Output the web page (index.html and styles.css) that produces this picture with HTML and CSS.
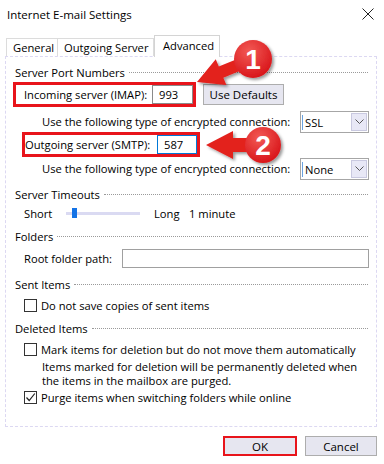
FILE: index.html
```html
<!DOCTYPE html>
<html lang="en">
<head>
    <meta charset="UTF-8">
    <title>Internet E-mail Settings</title>
    <link rel="stylesheet" href="styles.css">
</head>
<body>
<div class="dialog">

    <div class="titlebar">
        <span class="title">Internet E-mail Settings</span>
        <svg class="close" width="12" height="12" viewBox="0 0 12 12">
            <path d="M0.5 0.5 L11.5 11.5 M11.5 0.5 L0.5 11.5" stroke="#222" stroke-width="1"/>
        </svg>
    </div>

    <div class="tabs">
        <div class="tab tab-general">General</div>
        <div class="tab tab-outgoing">Outgoing Server</div>
        <div class="tab tab-advanced active">Advanced</div>
    </div>

    <div class="panel">
        <div class="group-title g-ports"><span>Server Port Numbers</span></div>

        <div class="row port-row first-port">
            <div class="callout incoming">
                <span>Incoming server (IMAP):</span>
                <div class="field port">993</div>
            </div>
            <div class="btn defaults">Use Defaults</div>
        </div>

        <div class="row enc-row enc-first">
            <span>Use the following type of encrypted connection:</span>
            <div class="select">
                <span class="select-value">SSL</span>
                <span class="drop"><svg width="9" height="6" viewBox="0 0 9 6"><path d="M0.5 0.5 L4.5 4.5 L8.5 0.5" fill="none" stroke="#555" stroke-width="1"/></svg></span>
            </div>
        </div>

        <div class="row port-row">
            <div class="callout outgoing">
                <span>Outgoing server (SMTP):</span>
                <div class="field port focused">587</div>
            </div>
        </div>

        <div class="row enc-row enc-second">
            <span>Use the following type of encrypted connection:</span>
            <div class="select">
                <span class="select-value">None</span>
                <span class="drop"><svg width="9" height="6" viewBox="0 0 9 6"><path d="M0.5 0.5 L4.5 4.5 L8.5 0.5" fill="none" stroke="#555" stroke-width="1"/></svg></span>
            </div>
        </div>

        <div class="group-title g-timeouts"><span>Server Timeouts</span></div>
        <div class="row slider-row">
            <span class="short">Short</span>
            <div class="track"><div class="thumb"></div></div>
            <span class="long">Long</span>
            <span>1 minute</span>
        </div>

        <div class="group-title g-folders"><span>Folders</span></div>
        <div class="row root-row">
            <span>Root folder path:</span>
            <div class="field root"></div>
        </div>

        <div class="group-title g-sent"><span>Sent Items</span></div>
        <div class="row check-row cb-sent">
            <span class="checkbox"></span>
            <span>Do not save copies of sent items</span>
        </div>

        <div class="group-title g-deleted"><span>Deleted Items</span></div>
        <div class="row check-row cb-mark">
            <span class="checkbox"></span>
            <span>Mark items for deletion but do not move them automatically</span>
        </div>
        <div class="note">
            <div class="note-line">Items marked for deletion will be permanently deleted when</div>
            <div class="note-line">the items in the mailbox are purged.</div>
        </div>
        <div class="row check-row cb-purge">
            <span class="checkbox checked"><svg width="11" height="11" viewBox="0 0 11 11"><path d="M1.5 5.5 L4.2 8.5 L9.8 1.5" fill="none" stroke="#222" stroke-width="1.2"/></svg></span>
            <span>Purge items when switching folders while online</span>
        </div>
    </div>

    <div class="actions">
        <div class="btn ok">OK</div>
        <div class="btn cancel">Cancel</div>
    </div>

    <!-- red annotation markers -->
    <svg class="annotations" width="384" height="464" viewBox="0 0 384 464">
        <defs>
            <filter id="shadow" x="-20%" y="-20%" width="150%" height="150%">
                <feDropShadow dx="2" dy="2" stdDeviation="1.5" flood-color="#000" flood-opacity="0.4"/>
            </filter>
            <radialGradient id="gloss" cx="40%" cy="30%" r="70%">
                <stop offset="0" stop-color="#f25a55"/>
                <stop offset="1" stop-color="#d9161b"/>
            </radialGradient>
        </defs>
        <g filter="url(#shadow)">
            <polygon transform="translate(197 82) rotate(-22.3)" points="0,0 26,-14 26,-6 52,-6 52,6 26,6 26,14" fill="#e3201f"/>
            <circle cx="253" cy="59" r="19" fill="url(#gloss)"/>
        </g>
        <text x="253" y="69" class="badge-num">1</text>
        <g filter="url(#shadow)">
            <polygon transform="translate(206 145)" points="0,0 27,-14 27,-7 52,-7 52,7 27,7 27,14" fill="#e3201f"/>
            <circle cx="263" cy="145" r="18" fill="url(#gloss)"/>
        </g>
        <text x="263" y="155" class="badge-num">2</text>
    </svg>
</div>
</body>
</html>
```

FILE: styles.css
```css
body {
    margin: 0;
    background: #fff;
    font-family: "Open Sans", "Noto Sans", sans-serif;
    font-size: 11.2px;
    color: #000;
}

.dialog {
    position: relative;
    width: 384px;
    height: 464px;
    overflow: hidden;
}

.titlebar {
    height: 28px;
    display: flex;
    align-items: center;
    justify-content: space-between;
    padding: 0 10px 0 7px;
    font-size: 11.5px;
}

.tabs {
    height: 28px;
    display: flex;
    align-items: flex-end;
    padding-left: 6px;
}

.tab {
    box-sizing: border-box;
    height: 18px;
    border: 1px solid #dcdcdc;
    border-bottom: none;
    line-height: 17px;
    padding-left: 6px;
    background: #fff;
}

.tab + .tab {
    border-left: none;
}

.tab-general { width: 52px; }
.tab-outgoing { width: 96px; }

.tab-advanced {
    width: 66px;
    height: 22px;
    line-height: 19px;
    padding-left: 8px;
    border-color: #d4d4d4;
    border-left: 1px solid #d4d4d4 !important;
    margin-bottom: -1px;
    position: relative;
    z-index: 1;
}

.panel {
    box-sizing: border-box;
    width: 372px;
    height: 371px;
    margin-left: 5px;
    border: 1px dashed #dcd8f2;
    display: flex;
    flex-direction: column;
}

.row {
    display: flex;
    align-items: center;
}

.group-title {
    height: 16px;
    display: flex;
    align-items: center;
    padding: 0 8px 0 9px;
}

.group-title::after {
    content: "";
    flex: 1;
    margin-left: 4px;
    margin-top: 1px;
    border-top: 1px dotted #9a9a9a;
}

.g-ports { margin-top: 7px; }
.g-timeouts { margin-top: 7px; }
.g-folders { margin-top: 7px; }
.g-sent { margin-top: 8px; }
.g-deleted { margin-top: 7px; }

.port-row {
    height: 25px;
}

.first-port { margin-top: 2px; }

.callout {
    box-sizing: border-box;
    height: 25px;
    display: flex;
    align-items: center;
    justify-content: space-between;
    border: 3px solid #e8141b;
}

.incoming {
    width: 183px;
    margin-left: 7px;
    padding-left: 8px;
}

.outgoing {
    width: 178px;
    margin-left: 16px;
    padding-left: 0;
}

.field {
    box-sizing: border-box;
    height: 19px;
    border: 1px solid #8a8a8a;
    line-height: 17px;
    background: #fff;
}

.port {
    width: 41px;
    padding-left: 6px;
}

.focused {
    width: 40px;
    border-color: #0078d7;
}

.btn {
    box-sizing: border-box;
    display: flex;
    align-items: center;
    justify-content: center;
    border: 1px solid #adadad;
    background: #e6e6f0;
    font-size: 11.5px;
}

.defaults {
    width: 81px;
    height: 21px;
    margin-left: 7px;
}

.enc-row {
    height: 21px;
    padding: 0 7px 0 36px;
}

.enc-first { margin-top: 4px; }
.enc-second { margin-top: 1px; }

.select {
    box-sizing: border-box;
    width: 69px;
    height: 22px;
    margin-left: auto;
    align-self: flex-start;
    border: 1px solid #a6a6a6;
    display: flex;
    align-items: center;
    padding: 1px;
}

.select-value {
    flex: 1;
    padding-left: 2px;
    border-left: 1px solid #6aa3e0;
}

.drop {
    box-sizing: border-box;
    width: 16px;
    height: 18px;
    display: flex;
    align-items: center;
    justify-content: center;
    border: 1px solid #c9c9e0;
    background: #e8e8f6;
}

.slider-row {
    height: 16px;
    margin-top: 3px;
    padding-left: 18px;
}

.short {
    width: 42px;
}

.track {
    position: relative;
    width: 74px;
    height: 3px;
    background: #dadaf2;
}

.thumb {
    position: absolute;
    left: 6px;
    top: -4px;
    width: 5px;
    height: 10px;
    background: #1473e6;
}

.long {
    width: 35px;
    margin-left: 14px;
}

.root-row {
    height: 19px;
    margin-top: 5px;
    padding: 0 7px 0 18px;
}

.root {
    width: 247px;
    margin-left: auto;
    border-color: #a0a0a0;
}

.check-row {
    height: 16px;
    padding-left: 18px;
    gap: 4px;
}

.cb-sent { margin-top: 5px; }
.cb-mark { margin-top: 5px; }
.cb-purge { margin-top: 1px; }

.checkbox {
    box-sizing: border-box;
    width: 13px;
    height: 13px;
    border: 1px solid #333;
    display: flex;
    align-items: center;
    justify-content: center;
}

.note {
    margin-top: 3px;
    padding-left: 36px;
}

.note-line {
    height: 14px;
    line-height: 14px;
}

.actions {
    display: flex;
    justify-content: flex-end;
    gap: 8px;
    margin-top: 9px;
    padding-right: 7px;
}

.actions .btn {
    height: 20px;
}

.ok {
    width: 74px;
    border: 2px solid #e8141b;
}

.cancel {
    width: 72px;
}

.annotations {
    position: absolute;
    left: 0;
    top: 0;
    pointer-events: none;
}

.badge-num {
    font-family: "Liberation Sans", Arial, sans-serif;
    font-weight: bold;
    font-size: 28px;
    fill: #fff;
    text-anchor: middle;
}
```
